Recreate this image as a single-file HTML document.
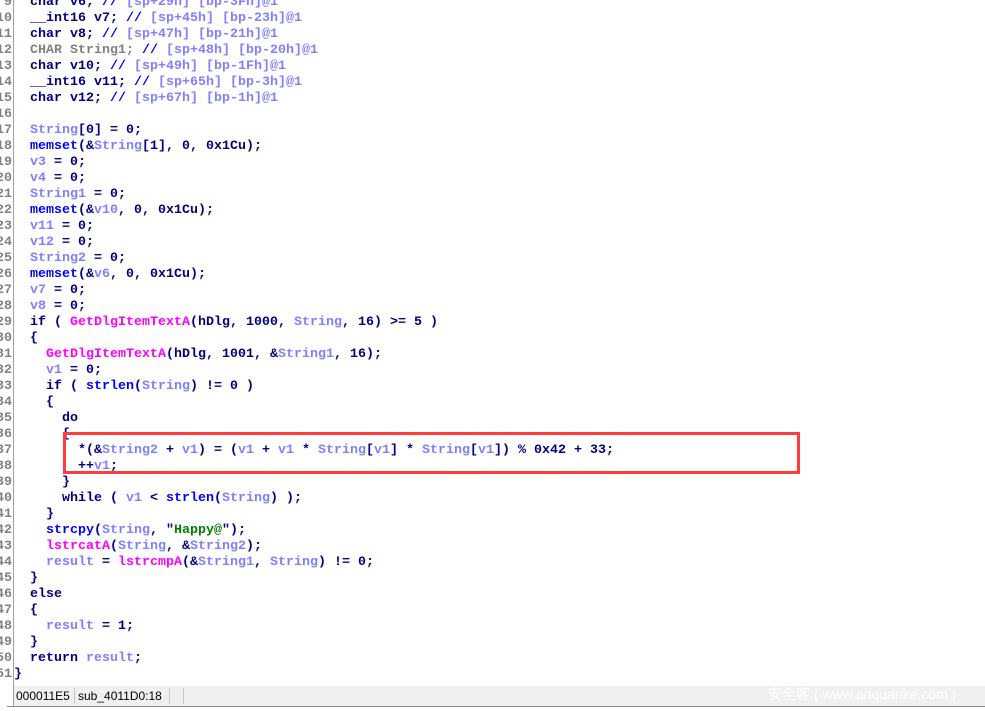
<!DOCTYPE html>
<html><head><meta charset="utf-8"><style>
html,body{margin:0;padding:0;background:#fff;width:985px;height:711px;overflow:hidden;position:relative}
.gut{position:absolute;left:0;top:0;width:13px;height:686px;overflow:hidden;border-right:1px solid #a0a0a0;background:#fff}
.gut pre,.code pre{margin:0;font-family:"Liberation Mono",monospace;font-weight:bold;font-size:13.33px;line-height:16px;white-space:pre}
.gut pre{position:absolute;right:1px;top:-5px;text-align:right;color:#808080}
.code{position:absolute;left:14px;top:0;right:0;height:686px;overflow:hidden}
.code pre{position:absolute;left:0;top:-5px;color:#000080}
.v{color:#8080ff}.m{color:#ff00ff}.f{color:#0000ff}.g{color:#008000}.c{color:#808080}
.box{position:absolute;left:63px;top:432px;width:731px;height:36px;border:3px solid #ff3b3b}
.sb{position:absolute;left:13px;top:686px;width:972px;height:20px;background:#f0f0f0;border-left:1px solid #a0a0a0;font-family:"Liberation Sans",sans-serif;font-size:12px;color:#000}
.sb span{position:absolute;top:3px}
.sep{position:absolute;top:2px;width:1px;height:16px;background:#c8c8c8}
.bot{position:absolute;left:7px;top:706px;width:978px;height:1px;background:#8a8a95}
.wm{position:absolute;left:768px;top:684px;font-family:"Liberation Sans","Noto Sans CJK SC",sans-serif;font-size:14px;color:#fff}
</style></head><body>
<div class="gut"><pre>9
10
11
12
13
14
15
16
17
18
19
20
21
22
23
24
25
26
27
28
29
30
31
32
33
34
35
36
37
38
39
40
41
42
43
44
45
46
47
48
49
50
51</pre></div>
<div class="code"><pre>  char v6; <span class="f">//</span> <span class="v">[sp+29h] [bp-3Fh]@1</span>
  __int16 v7; <span class="f">//</span> <span class="v">[sp+45h] [bp-23h]@1</span>
  char v8; <span class="f">//</span> <span class="v">[sp+47h] [bp-21h]@1</span>
  <span class="c">CHAR String1;</span> <span class="f">//</span> <span class="v">[sp+48h] [bp-20h]@1</span>
  char v10; <span class="f">//</span> <span class="v">[sp+49h] [bp-1Fh]@1</span>
  __int16 v11; <span class="f">//</span> <span class="v">[sp+65h] [bp-3h]@1</span>
  char v12; <span class="f">//</span> <span class="v">[sp+67h] [bp-1h]@1</span>

  <span class="v">String</span>[0] = 0;
  <span class="f">memset</span>(&amp;<span class="v">String</span>[1], 0, 0x1Cu);
  <span class="v">v3</span> = 0;
  <span class="v">v4</span> = 0;
  <span class="v">String1</span> = 0;
  <span class="f">memset</span>(&amp;<span class="v">v10</span>, 0, 0x1Cu);
  <span class="v">v11</span> = 0;
  <span class="v">v12</span> = 0;
  <span class="v">String2</span> = 0;
  <span class="f">memset</span>(&amp;<span class="v">v6</span>, 0, 0x1Cu);
  <span class="v">v7</span> = 0;
  <span class="v">v8</span> = 0;
  if ( <span class="m">GetDlgItemTextA</span>(hDlg, 1000, <span class="v">String</span>, 16) &gt;= 5 )
  {
    <span class="m">GetDlgItemTextA</span>(hDlg, 1001, &amp;<span class="v">String1</span>, 16);
    <span class="v">v1</span> = 0;
    if ( <span class="f">strlen</span>(<span class="v">String</span>) != 0 )
    {
      do
      {
        *(&amp;<span class="v">String2</span> + <span class="v">v1</span>) = (<span class="v">v1</span> + <span class="v">v1</span> * <span class="v">String</span>[<span class="v">v1</span>] * <span class="v">String</span>[<span class="v">v1</span>]) % 0x42 + 33;
        ++<span class="v">v1</span>;
      }
      while ( <span class="v">v1</span> &lt; <span class="f">strlen</span>(<span class="v">String</span>) );
    }
    <span class="f">strcpy</span>(<span class="v">String</span>, "<span class="g">Happy@</span>");
    <span class="m">lstrcatA</span>(<span class="v">String</span>, &amp;<span class="v">String2</span>);
    <span class="v">result</span> = <span class="m">lstrcmpA</span>(&amp;<span class="v">String1</span>, <span class="v">String</span>) != 0;
  }
  else
  {
    <span class="v">result</span> = 1;
  }
  return <span class="v">result</span>;
}</pre></div>
<div class="box"></div>
<div class="sb"><span style="left:2px">000011E5</span><div class="sep" style="left:60px"></div><span style="left:64px">sub_4011D0:18</span><div class="sep" style="left:155px"></div><div class="sep" style="left:169px"></div></div>
<div class="wm">安全客 ( www.anquanke.com )</div>
<div class="bot"></div>
</body></html>
